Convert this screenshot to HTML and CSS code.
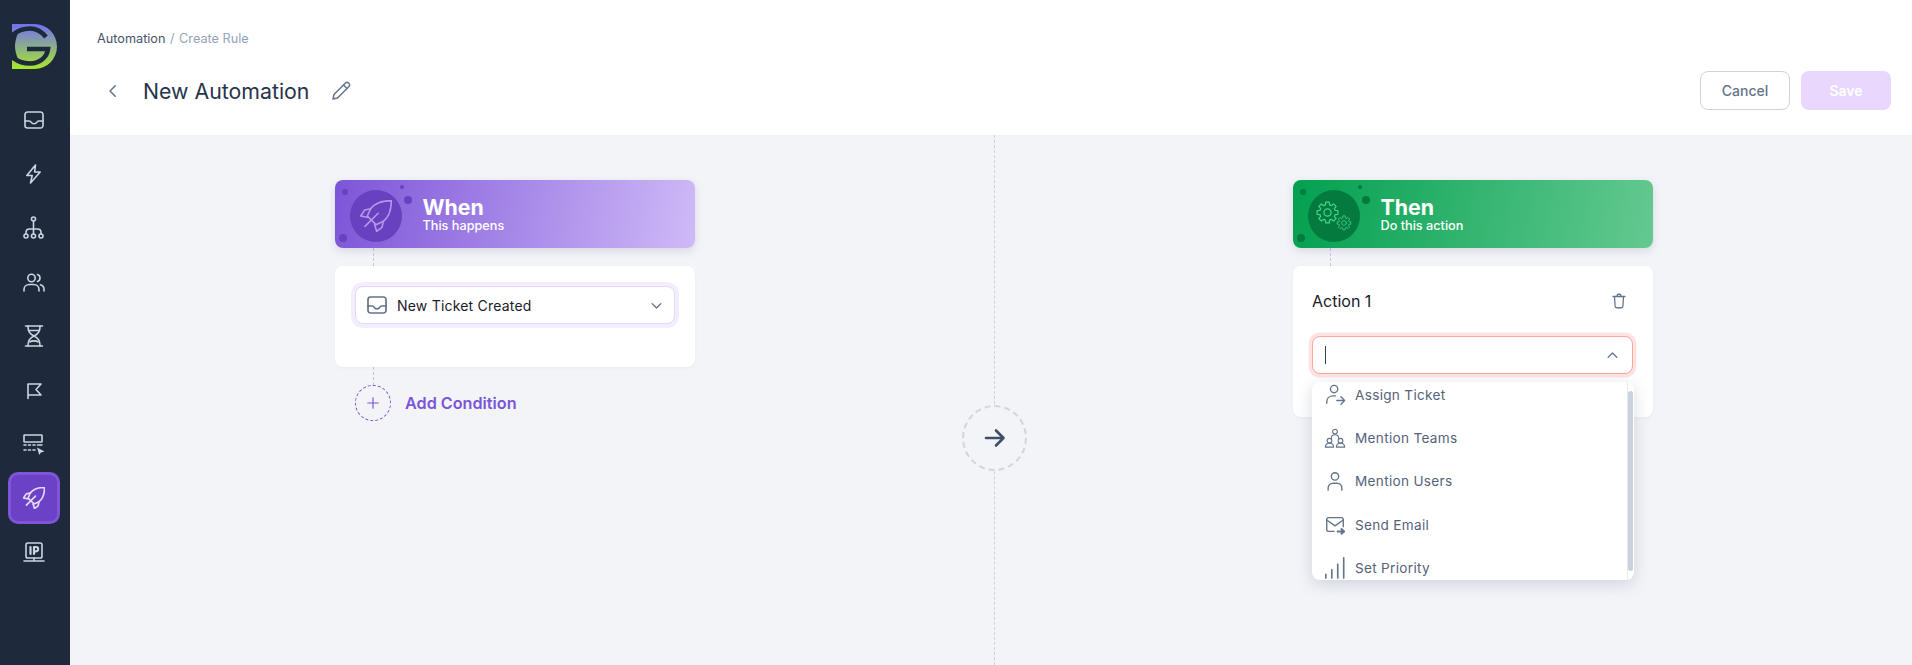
FILE: index.html
```html
<!DOCTYPE html>
<html lang="en">
<head>
<meta charset="utf-8">
<title>New Automation</title>
<link rel="stylesheet" href="styles.css">
</head>
<body>
<svg class="defs" width="0" height="0" aria-hidden="true">
  <defs>
    <linearGradient id="logoGrad" x1="0" y1="0" x2="0" y2="1">
      <stop offset="0" stop-color="#7171f2"/>
      <stop offset="1" stop-color="#a5e928"/>
    </linearGradient>
    <symbol id="i-inbox" viewBox="0 0 24 24"><path d="M3 6.500A2.500 2.500 0 0 1 5.500 4h13A2.500 2.500 0 0 1 21 6.500v11a2.500 2.500 0 0 1-2.500 2.500h-13A2.500 2.500 0 0 1 3 17.500z"/><path d="M3 13h4.300c1 0 1.500.6 2 1.400.5.900 1.300 1.400 2.700 1.400s2.200-.5 2.700-1.400c.5-.8 1-1.400 2-1.400H21"/></symbol>
    <symbol id="i-rocket" viewBox="0 0 24 24"><path d="M23.500.5C17 .5 11 2.500 8 6.500L5.500 12l6.500 6.500 5.500-2.500C21.500 13 23.500 7 23.500.5z"/><path d="M8 6.500 3.500 7.500.5 12l5 1"/><path d="m17.500 16-1 4.500-4 3-1.500-5"/><path d="M3.700 19.800 13.600 9.900"/></symbol>
    <symbol id="i-gear" viewBox="0 0 24 24"><path d="M13.910 1.170 14.120 4.080 16.100 4.900 18.310 2.990 21.010 5.690 19.100 7.900 19.920 9.880 22.830 10.090V13.910L19.920 14.120 19.100 16.100 21.010 18.310 18.310 21.010 16.100 19.100 14.120 19.920 13.910 22.830H10.090L9.880 19.920 7.900 19.100 5.690 21.010 2.990 18.310 4.900 16.100 4.080 14.120 1.170 13.910V10.090L4.080 9.880 4.900 7.900 2.990 5.690 5.690 2.990 7.900 4.900 9.880 4.080 10.090 1.170z"/><circle cx="12" cy="12" r="3.800"/></symbol>
  </defs>
</svg>
<div class="app">
  <aside class="sidebar">
    <svg class="logo" viewBox="0 0 45 45" aria-label="logo">
      <path d="M0 0h22.500a22.500 22.500 0 0 1 0 45H0z" fill="url(#logoGrad)"/>
      <path class="logo-cut" d="M0 11.500C5 7 11 4.500 18 4.500c6 0 12 3.500 16 8.500"/>
      <path class="logo-cut" d="M0 33c5 4 11 6.500 18 6.500 10 0 17-6.500 18-14.500H15"/>
      <path class="logo-fill" d="M0 9h6C4 14 3 18 3 22s1 8 3 13H0z"/>
    </svg>
    <nav class="nav">
      <a class="nav-item"><svg class="icon-24"><use href="#i-inbox"/></svg></a>
      <a class="nav-item"><svg class="icon-24" viewBox="0 0 24 24"><path d="M13.500 3 4.800 13.500h5.400L8.500 21l9.700-11h-5.600z"/></svg></a>
      <a class="nav-item"><svg class="icon-24" viewBox="0 0 24 24"><circle cx="11.500" cy="3" r="2"/><circle cx="4" cy="20" r="2"/><circle cx="11.500" cy="20" r="2"/><circle cx="19" cy="20" r="2"/><path d="M11.500 5v13M4 18v-1.500c0-2 1.500-3.500 3.500-3.500h8c2 0 3.500 1.500 3.500 3.500V18"/></svg></a>
      <a class="nav-item"><svg class="icon-24" viewBox="0 0 24 24"><circle cx="9.500" cy="8" r="3.700"/><path d="M2 21v-1.500C2 16.500 4.500 14.500 7.500 14.500h4c3 0 5.500 2 5.500 5V21"/><path d="M15.500 4.500a3.700 3.700 0 0 1 0 7M18.500 14.800c2.200.7 3.500 2.500 3.500 4.700V21"/></svg></a>
      <a class="nav-item"><svg class="icon-24" viewBox="0 0 24 24"><path d="M3.500 2h17M3.500 22h17"/><path d="M6 2c0 5 1 7.500 6 10 5-2.500 6-5 6-10M6 22c0-5 1-7.500 6-10 5 2.500 6 5 6 10"/><path d="M7.500 6.500h9M8 18c1-1.500 7-1.500 8 0"/></svg></a>
      <a class="nav-item"><svg class="icon-24" viewBox="0 0 24 24"><path d="M6 20.500V6h13l-5 5.500 5 5.500H6"/></svg></a>
      <a class="nav-item"><svg class="icon-24" viewBox="0 0 24 24"><rect x="2" y="3" width="18" height="7" rx=".6"/><path d="M2 13h2M6.500 13h2M11 13h2M15.500 13H20M2 18h2M6.500 18h2M11 18h2"/><path class="solid" d="M15 15.500l7.500 4-3.600 1-1.600 2.500z"/></svg></a>
      <a class="nav-item active"><svg class="icon-24"><use href="#i-rocket"/></svg></a>
      <a class="nav-item"><svg class="icon-24" viewBox="0 0 24 24"><rect x="4" y="3" width="16" height="15" rx="1.800"/><path d="M12 18v3M2 21h20"/><path class="bold" d="M8.500 7v7M12 14V7h2a2 2 0 0 1 0 4.300h-2"/></svg></a>
    </nav>
  </aside>
  <main class="main">
    <header class="topbar">
      <div class="crumbs"><span class="crumb">Automation</span><span class="sep">/</span><span class="crumb-cur">Create Rule</span></div>
      <div class="title-row">
        <svg class="back" viewBox="0 0 24 24"><path d="m15 5-7 7 7 7"/></svg>
        <h1 class="title">New Automation</h1>
        <svg class="edit" viewBox="0 0 24 24"><path d="M4 20l1-4.500L16.500 4a2.100 2.100 0 0 1 3 0l.5.500a2.100 2.100 0 0 1 0 3L8.500 19z"/><path d="m14.500 6 3.500 3.500"/></svg>
        <div class="actions">
          <button class="btn btn-cancel">Cancel</button>
          <button class="btn btn-save">Save</button>
        </div>
      </div>
    </header>
    <section class="canvas">
      <div class="divider"></div>
      <div class="arrow-node">
        <svg viewBox="0 0 24 24"><path d="M3 12h17.500M13 4.500l7.500 7.500-7.500 7.500"/></svg>
      </div>
      <div class="col">
        <div class="banner banner-when">
          <span class="dot d1"></span><span class="dot d2"></span><span class="dot d3"></span><span class="dot d4"></span>
          <div class="badge"><svg class="badge-rocket"><use href="#i-rocket"/></svg></div>
          <div class="banner-text"><div class="banner-title">When</div><div class="banner-sub">This happens</div></div>
        </div>
        <div class="link"></div>
        <div class="card card-when">
          <div class="select select-when">
            <svg class="sel-icon"><use href="#i-inbox"/></svg>
            <span class="sel-text">New Ticket Created</span>
            <svg class="chev" viewBox="0 0 24 24"><path d="m5 9 7 7 7-7"/></svg>
          </div>
        </div>
        <div class="link"></div>
        <div class="add">
          <div class="add-circle"><svg viewBox="0 0 24 24"><path d="M12 3v18M3 12h18"/></svg></div>
          <span class="add-text">Add Condition</span>
        </div>
      </div>
      <div class="col">
        <div class="banner banner-then">
          <span class="dot d1"></span><span class="dot d2"></span><span class="dot d3"></span><span class="dot d4"></span>
          <div class="badge">
            <svg class="badge-gears" viewBox="0 0 52 52">
              <use href="#i-gear" x="8" y="11" width="23" height="23"/>
              <use href="#i-gear" x="28.500" y="25.500" width="15" height="15"/>
            </svg>
          </div>
          <div class="banner-text"><div class="banner-title">Then</div><div class="banner-sub">Do this action</div></div>
        </div>
        <div class="link link-then"></div>
        <div class="card card-then">
          <div class="action-head">
            <span class="action-title">Action 1</span>
            <svg class="trash" viewBox="0 0 24 24"><path d="M4 6h16M9.500 6V4.500A1.500 1.500 0 0 1 11 3h2a1.500 1.500 0 0 1 1.500 1.500V6M6 6l.8 13a2 2 0 0 0 2 2h6.400a2 2 0 0 0 2-2L18 6"/></svg>
          </div>
          <div class="select select-then">
            <span class="caret"></span>
            <svg class="chev" viewBox="0 0 24 24"><path d="m5 15 7-7 7 7"/></svg>
          </div>
          <div class="menu">
            <ul class="menu-list">
              <li class="menu-item"><svg class="m-icon" viewBox="0 0 24 24"><circle cx="11" cy="5.500" r="4"/><path d="M3 21v-1.500C3 15.500 6 13 10 13h2.500M14 18h8M18.500 14l4 4-4 4"/></svg>Assign Ticket</li>
              <li class="menu-item"><svg class="m-icon m-thin" viewBox="0 0 24 24"><circle cx="12" cy="5" r="2.600"/><path d="M8 12.500c0-2.500 1.800-4 4-4s4 1.500 4 4"/><circle cx="6" cy="15" r="2.600"/><path d="M1.500 22c0-2.700 1.800-4.300 4.500-4.300s4.500 1.600 4.500 4.300z"/><circle cx="18" cy="15" r="2.600"/><path d="M13.500 22c0-2.700 1.800-4.300 4.500-4.300s4.500 1.600 4.500 4.300z"/></svg>Mention Teams</li>
              <li class="menu-item"><svg class="m-icon" viewBox="0 0 24 24"><circle cx="12" cy="7" r="4"/><path d="M4.500 22v-2c0-3.500 2.500-5.500 5.500-5.500h4c3 0 5.500 2 5.500 5.500v2"/></svg>Mention Users</li>
              <li class="menu-item"><svg class="m-icon" viewBox="0 0 24 24"><path d="M11 19H5a2 2 0 0 1-2-2V6a2 2 0 0 1 2-2h14a2 2 0 0 1 2 2v8"/><path d="m3 6.500 9 6.500 9-6.500"/><path class="bold" d="M15 19h6M19 16.500l3 2.500-3 2.500"/></svg>Send Email</li>
              <li class="menu-item"><svg class="m-icon m-bars" viewBox="0 0 24 24"><path d="M2 23v-4M8.500 23v-9M15 23V8M21.500 23V1"/></svg>Set Priority</li>
            </ul>
            <div class="scroll"><div class="thumb"></div></div>
          </div>
        </div>
      </div>
    </section>
  </main>
</div>
</body>
</html>
```
FILE: styles.css
```css
* { box-sizing: border-box; }
html, body { margin: 0; height: 100%; }
body { font-family: Inter, "Noto Sans", sans-serif; color: #1e293b; overflow: hidden; }
.defs { position: absolute; }
svg { fill: none; stroke: currentColor; stroke-linecap: round; stroke-linejoin: round; display: block; }
symbol { overflow: visible; }
.app { display: flex; height: 665px; }

.sidebar { width: 70px; flex: none; background: #1e293b; padding: 24px 0 0 0; }
.logo { width: 45px; height: 45px; margin-left: 12px; stroke: none; overflow: hidden; }
.logo-cut { fill: none; stroke: #1e293b; stroke-width: 4.600; stroke-linecap: butt; stroke-linejoin: miter; }
.logo-fill { fill: #1e293b; stroke: none; }
.nav { display: flex; flex-direction: column; margin-top: 24px; }
.nav-item { height: 54px; width: 68px; display: flex; align-items: center; justify-content: center; color: #cbd5e1; }
.icon-24 { width: 24px; height: 24px; stroke-width: 1.600; }
.solid { fill: currentColor; stroke: none; }
.bold { stroke-width: 2.200; }
.nav-item.active { width: 52px; height: 52px; margin: 1px 8px; background: #6b42c6; border: 3px solid #7c55d8; border-radius: 10px; color: #e6d9fb; }
.nav-item.active .icon-24 { width: 22px; height: 22px; stroke-width: 1.800; }

.main { flex: 1; display: flex; flex-direction: column; min-width: 0; }
.topbar { height: 135px; background: #fff; padding: 31px 21px 0 27px; flex: none; }
.crumbs { display: flex; gap: 4.500px; font-size: 12.700px; line-height: 15px; color: #475569; }
.sep { color: #94a3b8; }
.crumb-cur { color: #94a3b8; }
.title-row { display: flex; align-items: center; margin-top: 25px; height: 39px; }
.back { width: 18px; height: 18px; margin-left: 7px; color: #64748b; stroke-width: 2; }
.title { margin: 0 0 0 21px; font-size: 21.300px; font-weight: 400; line-height: 28px; color: #27344a; }
.edit { width: 24px; height: 24px; margin-left: 20px; color: #64748b; stroke-width: 1.500; }
.actions { margin-left: auto; display: flex; gap: 11px; }
.btn { width: 90px; height: 39px; border-radius: 8px; font-family: inherit; font-size: 14px; font-weight: 500; }
.btn-cancel { background: #fff; border: 1px solid #cfd3e0; color: #64748b; }
.btn-save { background: #ead7fd; border: 0; color: #fff; font-weight: 600; }

.canvas { position: relative; flex: 1; background: #f2f4f8; display: flex; gap: 598px; padding: 45px 0 0 265px; }
.divider { position: absolute; left: 924px; top: 0; bottom: 0; border-left: 1px dashed #cdd2dc; }
.arrow-node { position: absolute; left: 892px; top: 270px; width: 65px; height: 66px; border-radius: 50%; border: 2px dashed #d0d5df; background: #f2f4f8; display: flex; align-items: center; justify-content: center; color: #3f4f66; }
.arrow-node svg { width: 24px; height: 24px; stroke-width: 2.600; }

.col { width: 360px; flex: none; position: relative; }
.banner { position: relative; height: 68px; border-radius: 8px; display: flex; align-items: center; padding-left: 14.500px; box-shadow: 0 3px 8px rgba(100, 100, 140, .18); color: #fff; overflow: hidden; }
.banner-when { background: linear-gradient(100deg, #7c55d8 0%, #cfbaf7 100%); }
.banner-then { background: linear-gradient(100deg, #03a04f 0%, #64c990 100%); }
.badge { width: 52px; height: 52px; margin-top: 4px; border-radius: 50%; display: flex; align-items: center; justify-content: center; flex: none; }
.banner-when .badge { background: #6841c0; color: #b398ea; }
.banner-then .badge { background: #057a3f; color: #3fd387; }
.badge-rocket { width: 32px; height: 32px; stroke-width: 1.200; }
.badge-gears { width: 52px; height: 52px; stroke-width: 1.300; }
.dot { position: absolute; border-radius: 50%; }
.banner-when .dot { background: #6841c0; }
.banner-then .dot { background: #057a3f; }
.d1 { left: 7px; top: 9px; width: 6px; height: 6px; }
.d2 { left: 65px; top: 5px; width: 4px; height: 4px; }
.d3 { left: 69px; top: 16px; width: 8px; height: 8px; }
.d4 { left: 4px; top: 54px; width: 8px; height: 8px; }
.banner-text { margin-left: 21px; }
.banner-title { font-size: 21.300px; font-weight: 700; line-height: 22px; }
.banner-sub { font-size: 12.700px; font-weight: 500; line-height: 15px; }

.link { height: 18px; margin-left: 38px; border-left: 1px dashed #c4c8d4; }
.link-then { margin-left: 37px; }
.card { background: #fff; border-radius: 8px; box-shadow: 0 1px 3px rgba(100, 100, 140, .06); position: relative; }
.card-when { height: 101px; padding: 20px; }
.card-then { height: 151px; padding: 0 20px 0 19px; }
.select { height: 38px; border-radius: 8px; background: #fff; display: flex; align-items: center; }
.select-when { border: 1px solid #e6d8fc; box-shadow: 0 0 0 4px #f4edfe; padding: 0 10px 0 9px; }
.select-then { border: 1px solid #f9a5a0; box-shadow: 0 0 0 3.500px #fde4e3; padding: 0 12px 0 12px; margin-top: 20px; }
.sel-icon { width: 24px; height: 24px; color: #64748b; stroke-width: 1.700; }
.sel-text { margin-left: 8px; font-size: 14px; letter-spacing: .2px; color: #1a1a2a; }
.chev { width: 15px; height: 15px; margin-left: auto; color: #64748b; stroke-width: 2.200; }
.caret { width: 1px; height: 18px; background: #334155; }
.action-head { display: flex; align-items: center; justify-content: space-between; padding-top: 20px; height: 50px; }
.action-title { font-size: 16px; color: #1a1a2a; }
.trash { width: 18px; height: 18px; margin-right: 5px; color: #64748b; stroke-width: 1.700; }

.menu { position: absolute; left: 19px; top: 116px; width: 322px; height: 198px; background: #fff; border-radius: 8px; box-shadow: 0 4px 16px rgba(80, 90, 120, .22); display: flex; overflow: hidden; }
.menu-list { flex: 1; list-style: none; margin: 0; padding: 0; overflow: hidden; }
.menu-item { height: 43.300px; display: flex; align-items: center; gap: 9px; padding-left: 12px; font-size: 13.600px; letter-spacing: .3px; color: #56627a; }
.menu-item:first-child { margin-top: -9px; }
.m-icon { width: 22px; height: 22px; color: #64748b; stroke-width: 1.500; flex: none; }
.m-thin { stroke-width: 1.200; }
.m-bars { stroke-width: 1.800; }
.scroll { width: 7px; border-left: 1px solid #e6e8ee; padding: 9px 0; flex: none; }
.thumb { height: 180px; width: 5px; margin-left: 0; background: #cbd2de; border-radius: 3px; }

.add { display: flex; align-items: center; gap: 14px; margin-left: 20px; }
.add-circle { width: 36px; height: 36px; border-radius: 50%; border: 1px dashed #7c55d8; display: flex; align-items: center; justify-content: center; color: #7c55d8; }
.add-circle svg { width: 14px; height: 14px; stroke-width: 2; }
.add-text { font-size: 16.200px; font-weight: 600; color: #7c55d8; }
```
